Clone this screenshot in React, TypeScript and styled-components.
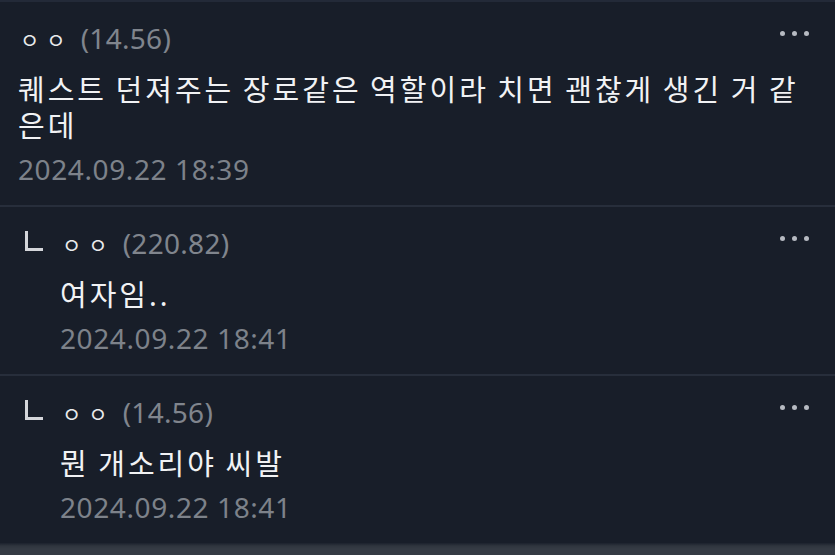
import * as React from 'react';
import styled, { createGlobalStyle } from 'styled-components';

const GlobalStyle = createGlobalStyle`
    html, body {
        margin: 0;
        padding: 0;
        background-color: #181e29;
    }
    body {
        font-family: "Noto Sans", "Noto Sans CJK KR", sans-serif;
        overflow: hidden;
    }
`

const Page = styled.div`
    width: 835px;
    height: 555px;
    display: flex;
    flex-direction: column;
    background-color: #181e29;
    border-top: 2px solid #232a38;
    box-sizing: border-box;
`

const Row = styled.div<{ $last?: boolean }>`
    display: flex;
    padding: 19px 24px 19px 18px;
    border-bottom: ${props => props.$last ? 'none' : '2px solid #272e3b'};
`

const ReplyMark = styled.div`
    width: 42px;
    flex-shrink: 0;
    display: flex;
    padding-top: 5px;
    box-sizing: border-box;

    &::before {
        content: '';
        display: block;
        margin-left: 7px;
        width: 15px;
        height: 17px;
        border-left: 3px solid #d4d6da;
        border-bottom: 3px solid #d4d6da;
    }
`

const Content = styled.div`
    flex: 1;
    display: flex;
    flex-direction: column;
    min-width: 0;
`

const Header = styled.div`
    display: flex;
    align-items: center;
    justify-content: space-between;
    height: 34px;
`

const Author = styled.div`
    display: flex;
    align-items: baseline;
    gap: 8px;
`

const Nick = styled.span`
    font-size: 21px;
    letter-spacing: 7px;
    color: #e9eaec;
    position: relative;
    top: -1px;
    margin-left: 2px;
`

const Ip = styled.span`
    font-size: 28px;
    letter-spacing: 0.3px;
    color: #80858d;
`

const More = styled.div`
    display: flex;
    gap: 7px;
    margin-bottom: 9px;
    margin-right: 2px;

    span {
        width: 5px;
        height: 5px;
        border-radius: 50%;
        background-color: #b6bac1;
    }
`

const Body = styled.div`
    margin-top: 17px;
    padding-right: 10px;
    font-size: 29px;
    line-height: 36px;
    letter-spacing: 3px;
    word-spacing: -2px;
    word-break: break-all;
    color: #f1f2f4;
`

const Date = styled.div`
    margin-top: 8px;
    font-size: 28px;
    line-height: 34px;
    letter-spacing: 0.6px;
    color: #7d828a;
`

const Footer = styled.div`
    flex: 1;
    background: linear-gradient(#1c222d 0px, #2f353e 3px, #353b44 6px, #353b44 100%);
`

interface Comment {
    ip: string,
    text: string,
    date: string,
    reply?: boolean,
}

const comments: Comment[] = [
    { ip: '(14.56)', text: '퀘스트 던져주는 장로같은 역할이라 치면 괜찮게 생긴 거 같은데', date: '2024.09.22 18:39' },
    { ip: '(220.82)', text: '여자임..', date: '2024.09.22 18:41', reply: true },
    { ip: '(14.56)', text: '뭔 개소리야 씨발', date: '2024.09.22 18:41', reply: true },
];

export default function App() {
    return (
        <>
            <GlobalStyle />
            <Page>
                {comments.map((c, i) => (
                    <Row key={i} $last={i === comments.length - 1}>
                        {c.reply && <ReplyMark />}
                        <Content>
                            <Header>
                                <Author>
                                    <Nick>ㅇㅇ</Nick>
                                    <Ip>{c.ip}</Ip>
                                </Author>
                                <More><span /><span /><span /></More>
                            </Header>
                            <Body>{c.text}</Body>
                            <Date>{c.date}</Date>
                        </Content>
                    </Row>
                ))}
                <Footer />
            </Page>
        </>
    );
}
